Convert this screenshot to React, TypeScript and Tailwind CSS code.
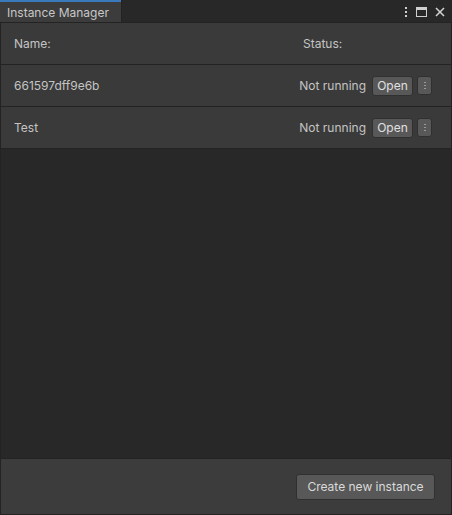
import React from "react";

const instances = [
  { name: "661597dff9e6b", status: "Not running" },
  { name: "Test", status: "Not running" },
];

const App: React.FC = () => {
  return (
    <div
      className="w-[452px] h-[515px] flex flex-col bg-[#282828] text-[#c4c4c4] text-[12px] overflow-hidden"
      style={{ fontFamily: "Inter, 'Noto Sans', sans-serif" }}
    >
      {/* tab strip */}
      <div className="h-[23px] flex items-stretch bg-[#282828] border-b border-[#232323]">
        <div className="w-[122px] flex flex-col bg-[#3c3c3c] border-r border-[#232323]">
          <div className="h-[2px] bg-[#3a79bb]" />
          <div className="flex-1 flex items-center pl-[7px] pt-[2px] text-[12px] text-[#c8c8c8]">
            Instance Manager
          </div>
        </div>
        <div className="flex-1" />
        <div className="flex items-center gap-[8px] pr-[7px] pt-[1px] text-[#d0d0d0]">
          <svg width="4" height="12" viewBox="0 0 4 12" className="fill-current">
            <rect x="1" y="1" width="2" height="2" />
            <rect x="1" y="5" width="2" height="2" />
            <rect x="1" y="9" width="2" height="2" />
          </svg>
          <svg width="11" height="10" viewBox="0 0 11 10" fill="none" stroke="currentColor">
            <rect x="0.5" y="0.5" width="10" height="9" />
            <line x1="0.5" y1="2" x2="10.5" y2="2" strokeWidth="2" />
          </svg>
          <svg width="10" height="10" viewBox="0 0 10 10" stroke="currentColor" strokeWidth="1.6">
            <line x1="1" y1="1" x2="9" y2="9" />
            <line x1="9" y1="1" x2="1" y2="9" />
          </svg>
        </div>
      </div>

      {/* list */}
      <div className="flex flex-col bg-[#3a3a3a] border-x border-[#232323]">
        <div className="h-[42px] flex items-center border-b border-[#232323]">
          <div className="flex-1 pl-[13px]">Name:</div>
          <div className="w-[148px]">Status:</div>
        </div>
        {instances.map((inst) => (
          <div key={inst.name} className="h-[42px] flex items-center border-b border-[#232323]">
            <div className="flex-1 pl-[13px]">{inst.name}</div>
            <div className="flex items-center pr-[19px]">
              <span className="mr-[6px]">{inst.status}</span>
              <button className="h-[20px] w-[41px] rounded-[3px] bg-[#585858] border border-[#303030] text-[#e0e0e0] text-[12px] leading-none">
                Open
              </button>
              <button className="ml-[4px] w-[15px] h-[19px] rounded-[3px] bg-[#585858] border border-[#303030] flex items-center justify-center">
                <svg width="2" height="7" viewBox="0 0 2 7" className="fill-[#9a9a9a]">
                  <rect x="0" y="0" width="2" height="1" />
                  <rect x="0" y="3" width="2" height="1" />
                  <rect x="0" y="6" width="2" height="1" />
                </svg>
              </button>
            </div>
          </div>
        ))}
      </div>

      <div className="flex-1 border-x border-[#232323]" />

      {/* footer */}
      <div className="h-[57px] flex items-center justify-end pr-[16px] bg-[#3c3c3c] border border-[#232323]">
        <button className="h-[26px] w-[139px] rounded-[3px] bg-[#585858] border border-[#303030] text-[#dadada] text-[12px]">
          Create new instance
        </button>
      </div>
    </div>
  );
};

export default App;
